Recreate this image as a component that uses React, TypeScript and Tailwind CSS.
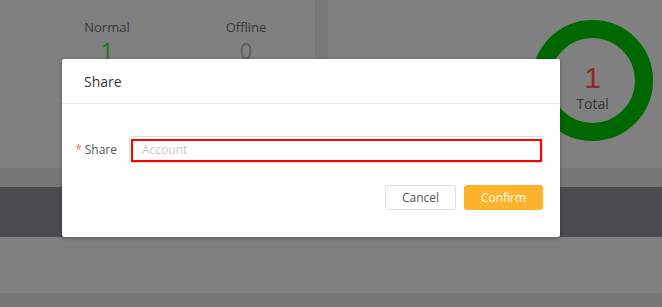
import React from "react";

export default function App() {
  const font = { fontFamily: '"Open Sans", "Noto Sans", Arial, sans-serif' };
  return (
    <div
      className="relative w-[662px] h-[307px] overflow-hidden bg-[#808080] flex flex-col"
      style={font}
    >
      {/* background page (dimmed) */}
      <div className="flex h-[168px]">
        <div className="w-[315px] flex pt-[8px]">
          <div className="ml-[43px] w-px h-[145px] bg-[#757575]" />
          <div className="flex-1 flex">
            <div className="w-[128px] flex flex-col items-center pt-[10px]">
              <div className="text-[13px] leading-[18px] text-[#363636]">Normal</div>
              <div className="text-[22px] leading-[26px] text-[#127a12] mt-[1px]">1</div>
            </div>
            <div className="w-[150px] flex flex-col items-center pt-[10px]">
              <div className="text-[13px] leading-[18px] text-[#363636]">Offline</div>
              <div className="text-[22px] leading-[26px] text-[#5e5e5e] mt-[1px]">0</div>
            </div>
          </div>
        </div>
        <div className="w-[13px] bg-[#787878]" />
        <div className="flex-1 flex justify-end pr-[9px] pt-[20px]">
          <div className="relative w-[121px] h-[121px]">
            <svg width="121" height="121" viewBox="0 0 121 121">
              <circle cx="60.5" cy="60.5" r="51.5" fill="none" stroke="#006800" strokeWidth="18" />
            </svg>
            <div className="absolute inset-0 flex flex-col items-center pt-[44px]">
              <div className="font-['Liberation_Sans',Arial,sans-serif] font-light text-[30px] leading-[27px] text-[#8a2a2a]">
                1
              </div>
              <div className="text-[14px] leading-[16px] text-[#333333] mt-[5px]">Total</div>
            </div>
          </div>
        </div>
      </div>
      <div className="h-[19px] bg-[#777777]" />
      <div className="h-[50px] bg-[#4b4b50]" />
      <div className="h-[56px] bg-[#808080]" />
      <div className="flex-1 bg-[#777777]" />

      {/* modal */}
      <div className="absolute left-[62px] top-[59px] w-[498px] h-[178px] bg-white rounded-[2px] shadow-[0_1px_4px_rgba(0,0,0,0.3)] flex flex-col">
        <div className="h-[45px] border-b border-[#ebebeb] flex items-center px-[22px]">
          <span className="text-[14px] text-[#333333]">Share</span>
        </div>
        <div className="flex items-center pt-[32px] pr-[17px]">
          <div className="w-[67px] flex justify-end pr-[12px] text-[12px] text-[#555555]">
            <span className="text-[#f56c6c] mr-[3px]">*</span>
            <span>Share</span>
          </div>
          <div className="relative flex-1 h-[27px] border border-[#dcdfe6] rounded-[2px] flex items-center pl-[12px]">
            <span className="text-[12px] text-[#c9c9c9]">Account</span>
            <div className="absolute left-[1px] top-[2px] right-0 bottom-0 border-[2px] border-[#ff0000]" />
          </div>
        </div>
        <div className="flex justify-end gap-[8px] pr-[17px] pt-[22px]">
          <button className="w-[71px] h-[25px] border border-[#dcdfe6] rounded-[3px] bg-white text-[12px] text-[#555555]">
            Cancel
          </button>
          <button className="w-[79px] h-[25px] rounded-[3px] bg-[#fdb32c] text-[12px] text-white">
            Confirm
          </button>
        </div>
      </div>
    </div>
  );
}
